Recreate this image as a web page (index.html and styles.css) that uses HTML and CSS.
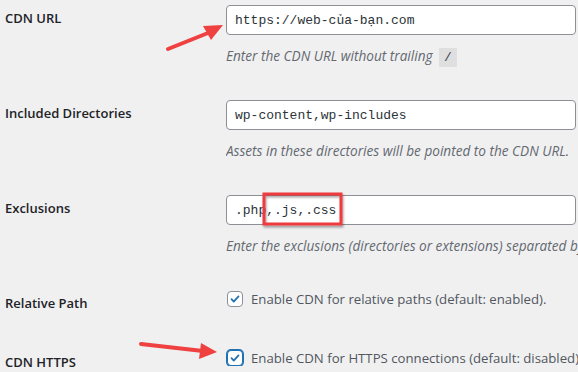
FILE: index.html
```html
<!DOCTYPE html>
<html lang="vi">
<head>
  <meta charset="UTF-8">
  <title>CDN Settings</title>
  <link rel="stylesheet" href="styles.css">
</head>
<body>
  <div class="form-table">
    <div class="row field-row">
      <div class="th">CDN URL</div>
      <div class="td">
        <input class="regular-text" type="text" value="https://web-của-bạn.com">
        <p class="description">Enter the CDN URL without trailing <code>/</code></p>
      </div>
    </div>
    <div class="row field-row">
      <div class="th">Included Directories</div>
      <div class="td">
        <input class="regular-text" type="text" value="wp-content,wp-includes">
        <p class="description">Assets in these directories will be pointed to the CDN URL.</p>
      </div>
    </div>
    <div class="row field-row">
      <div class="th">Exclusions</div>
      <div class="td">
        <input class="regular-text" type="text" value=".php,.js,.css">
        <p class="description">Enter the exclusions (directories or extensions) separated by</p>
      </div>
    </div>
    <div class="row check-row">
      <div class="th">Relative Path</div>
      <div class="td">
        <label class="check"><span class="box"><svg viewBox="0 0 16 16"><path d="M4 8.2l2.6 2.7L12 5"/></svg></span>Enable CDN for relative paths (default: enabled).</label>
      </div>
    </div>
    <div class="row check-row last">
      <div class="th">CDN HTTPS</div>
      <div class="td">
        <label class="check"><span class="box focus"><svg viewBox="0 0 16 16"><path d="M4 8.2l2.6 2.7L12 5"/></svg></span>Enable CDN for HTTPS connections (default: disabled).</label>
      </div>
    </div>
  </div>

  <svg class="notes" width="578" height="372" viewBox="0 0 578 372">
    <defs>
      <filter id="shade" x="-20%" y="-20%" width="140%" height="140%">
        <feDropShadow dx="1" dy="2" stdDeviation="1.2" flood-color="#000" flood-opacity="0.35"/>
      </filter>
    </defs>
    <line x1="168" y1="49" x2="208" y2="33" stroke="#ee4140" stroke-width="4" stroke-linecap="round"/>
    <polygon points="223,25 203,26 211,40" fill="#ee4140"/>
    <line x1="141" y1="344" x2="203" y2="351" stroke="#ee4140" stroke-width="4" stroke-linecap="round"/>
    <polygon points="217,352 201,343 199,359" fill="#ee4140"/>
    <rect x="264" y="194" width="77" height="30" fill="none" stroke="#ee3b3e" stroke-width="3" filter="url(#shade)"/>
  </svg>
</body>
</html>
```

FILE: styles.css
```css
body { margin: 0; background: #f0f0f1; font-family: "Open Sans", "Noto Sans", sans-serif; font-size: 13px; color: #1d2327; overflow: hidden; height: 372px; }
.form-table { padding: 5px 0 0 5px; }
.row { display: flex; align-items: flex-start; }
.field-row { height: 95px; }
.check-row { height: 59px; }
.check-row.last { height: auto; }
.th { width: 221px; flex: none; font-weight: 600; font-size: 13px; line-height: 18px; padding-top: 4px; }
.td { flex: none; width: 352px; overflow: hidden; }
.regular-text { box-sizing: border-box; width: 350px; height: 30px; margin: 0; padding: 0 8px; border: 1px solid #8c8f94; border-radius: 4px; background: #fff; font-family: "Liberation Mono", monospace; font-size: 13px; color: #2c3338; }
.description { margin: 11px 0 0; font-style: italic; color: #646970; font-size: 13.6px; line-height: 19px; white-space: nowrap; }
.description code { display: inline-block; font-style: normal; background: #dfdfe0; padding: 0 5px; margin-left: 3px; font-family: "Liberation Mono", monospace; font-size: 13px; line-height: 19px; color: #3c434a; }
.check { display: flex; align-items: center; gap: 8px; color: #50575e; font-size: 13.2px; line-height: 16px; white-space: nowrap; padding: 1px 0 0 1px; }
.box { width: 16px; height: 16px; box-sizing: border-box; border: 1px solid #8c8f94; border-radius: 4px; background: #fff; flex: none; display: flex; }
.box svg { width: 14px; height: 14px; fill: none; stroke: #2271b1; stroke-width: 2; stroke-linecap: round; stroke-linejoin: round; }
.box.focus { border-color: #2271b1; box-shadow: 0 0 0 1px #2271b1; }
.notes { position: absolute; left: 0; top: 0; pointer-events: none; }
```
